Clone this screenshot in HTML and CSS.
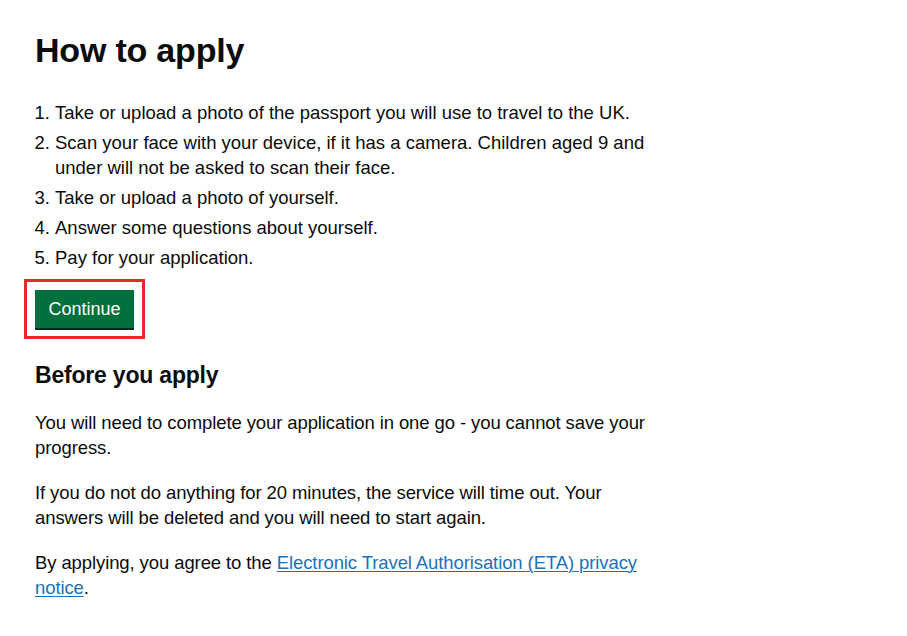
FILE: index.html
```html
<!DOCTYPE html>
<html lang="en">
<head>
<meta charset="utf-8">
<title>How to apply</title>
<link rel="stylesheet" href="styles.css">
</head>
<body>
<main class="page">
  <h1 class="heading-l">How to apply</h1>
  <ol class="steps">
    <li>Take or upload a photo of the passport you will use to travel to the UK.</li>
    <li>Scan your face with your device, if it has a camera. Children aged 9 and under will not be asked to scan their face.</li>
    <li>Take or upload a photo of yourself.</li>
    <li>Answer some questions about yourself.</li>
    <li>Pay for your application.</li>
  </ol>
  <div class="actions">
    <button class="button" type="button">Continue</button>
  </div>
  <h2 class="heading-m">Before you apply</h2>
  <p class="body">You will need to complete your application in one go - you cannot save your progress.</p>
  <p class="body">If you do not do anything for 20 minutes, the service will time out. Your answers will be deleted and you will need to start again.</p>
  <p class="body">By applying, you agree to the <a class="link" href="#">Electronic Travel Authorisation (ETA) privacy notice</a>.</p>
</main>
</body>
</html>
```
FILE: styles.css
```css
html, body {
  margin: 0;
  padding: 0;
  background: #ffffff;
}
body {
  font-family: "Liberation Sans", Arial, sans-serif;
  color: #0b0c0c;
}
.page {
  width: 622px;
  padding: 30px 0 0 35px;
}
.heading-l {
  font-size: 34px;
  line-height: 40px;
  font-weight: 700;
  margin: 0 0 30px;
  letter-spacing: -0.2px;
}
.steps {
  margin: 0 0 20px;
  padding: 0 0 0 20px;
  font-size: 18.5px;
  line-height: 25px;
}
.steps li {
  margin-bottom: 5px;
  padding-left: 0;
}
.steps li:last-child {
  margin-bottom: 0;
}
.actions {
  display: flex;
  margin-bottom: 32px;
}
.button {
  font-family: inherit;
  font-size: 18px;
  line-height: 19px;
  color: #ffffff;
  background: #00703c;
  border: 2px solid transparent;
  border-radius: 0;
  padding: 8px 8px 7px;
  width: 99px;
  box-shadow: 0 2px 0 #002d18;
  outline: 3px solid #e52a2a;
  outline-offset: 8px;
  cursor: pointer;
}
.heading-m {
  font-size: 23px;
  line-height: 30px;
  font-weight: 700;
  margin: 0 0 20px;
  letter-spacing: -0.2px;
}
.body {
  font-size: 18.5px;
  line-height: 25px;
  margin: 0 0 20px;
  letter-spacing: -0.1px;
}
.link {
  color: #1d70b8;
  text-decoration: underline;
  text-decoration-thickness: 1px;
  text-underline-offset: 2px;
}
```
